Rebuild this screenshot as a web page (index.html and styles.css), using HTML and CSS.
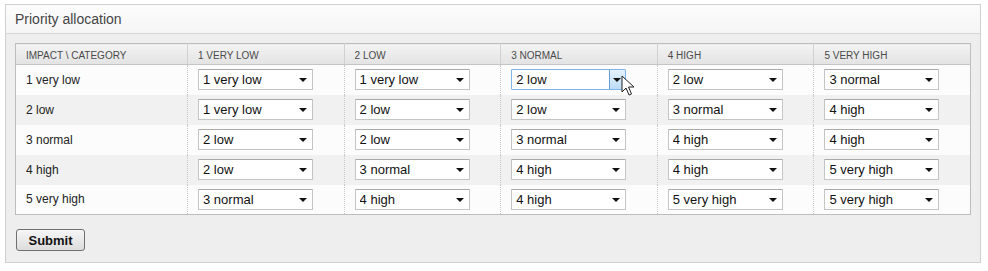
FILE: index.html
```html
<!DOCTYPE html>
<html lang="en">
<head>
    <meta charset="UTF-8">
    <title>Priority allocation</title>
    <link rel="stylesheet" href="styles.css">
</head>
<body>
    <div class="panel">
        <div class="panel-head">Priority allocation</div>
        <form class="panel-body">
            <table class="matrix">
                <thead>
                    <tr>
                        <th>Impact \ Category</th>
                        <th>1 very low</th>
                        <th>2 low</th>
                        <th>3 normal</th>
                        <th>4 high</th>
                        <th>5 very high</th>
                    </tr>
                </thead>
                <tbody id="rows">
                    <!-- rows are generated below -->
                </tbody>
            </table>
            <button type="button" class="submit-btn">Submit</button>
        </form>
    </div>

    <script>
        const levels = ['1 very low', '2 low', '3 normal', '4 high', '5 very high'];
        const matrix = [
            [0, 0, 1, 1, 2],
            [0, 1, 1, 2, 3],
            [1, 1, 2, 3, 3],
            [1, 2, 3, 3, 4],
            [2, 3, 3, 4, 4]
        ];
        const rows = document.getElementById('rows');

        matrix.forEach((row, r) => {
            const tr = document.createElement('tr');
            const label = document.createElement('td');
            label.className = 'row-label';
            label.textContent = levels[r];
            tr.appendChild(label);

            row.forEach((value, c) => {
                const td = document.createElement('td');
                const wrap = document.createElement('div');
                wrap.className = 'select-wrap';
                // the one the mouse is over
                if (r === 0 && c === 2) wrap.classList.add('hover');

                const select = document.createElement('select');
                levels.forEach((level, i) => {
                    const opt = document.createElement('option');
                    opt.textContent = level;
                    if (i === value) opt.selected = true;
                    select.appendChild(opt);
                });
                wrap.appendChild(select);

                const arrow = document.createElement('span');
                arrow.className = 'arrow';
                wrap.appendChild(arrow);

                if (wrap.classList.contains('hover')) {
                    wrap.insertAdjacentHTML('beforeend',
                        '<svg class="cursor" width="14" height="22" viewBox="0 0 14 22">' +
                        '<path d="M1 1 L1 17 L5 13 L8 20 L10.5 19 L7.5 12 L13 12 Z" fill="#fff" stroke="#222" stroke-width="1" stroke-linejoin="round"/>' +
                        '</svg>');
                }
                td.appendChild(wrap);
                tr.appendChild(td);
            });
            rows.appendChild(tr);
        });
    </script>
</body>
</html>
```

FILE: styles.css
```css
* {
    margin: 0;
    padding: 0;
    box-sizing: border-box;
}

body {
    background: #fff;
    font-family: 'Liberation Sans', Arial, sans-serif;
    color: #222;
    padding: 4px 7px 0 5px;
}

.panel {
    width: 976px;
    height: 259px;
    border: 1px solid #d0d0d0;
    background: #eeeeee;
}

.panel-head {
    height: 29px;
    padding: 6px 9px 0;
    font-size: 14px;
    color: #444;
    background: linear-gradient(#fcfcfc, #f5f5f5);
    border-bottom: 1px solid #d6d6d6;
}

.panel-body {
    padding: 9px 9px 0;
}

.matrix {
    width: 956px;
    border-collapse: collapse;
    border: 1px solid #bdbdbd;
    table-layout: fixed;
}

.matrix th {
    height: 21px;
    padding: 3px 0 0 10px;
    text-align: left;
    font-size: 10px;
    font-weight: normal;
    text-transform: uppercase;
    color: #4a4a4a;
    background: linear-gradient(#f3f3f3, #e3e3e3);
    border-bottom: 1px solid #c4c4c4;
    border-left: 1px solid #d0d0d0;
    vertical-align: middle;
}

.matrix th:first-child {
    width: 172px;
    border-left: none;
}

.matrix td {
    height: 30px;
    padding: 0 0 0 10px;
    border-left: 1px dotted #c8c8c8;
    vertical-align: middle;
}

.matrix td.row-label {
    border-left: none;
    font-size: 12px;
    color: #222;
}

.matrix tbody tr:nth-child(odd) {
    background: #fcfcfc;
}

.matrix tbody tr:nth-child(even) {
    background: #f1f1f1;
}

.select-wrap {
    position: relative;
    width: 115px;
    height: 21px;
}

.select-wrap select {
    appearance: none;
    -webkit-appearance: none;
    width: 100%;
    height: 100%;
    padding: 0 0 0 4px;
    font-family: 'Liberation Sans', Arial, sans-serif;
    font-size: 13px;
    color: #111;
    background: #fff;
    border: 1px solid #c4c4c4;
    border-top-color: #aaa;
    border-radius: 1px;
    outline: none;
}

.arrow {
    position: absolute;
    right: 6px;
    top: 9px;
    width: 0;
    height: 0;
    border-left: 4px solid transparent;
    border-right: 4px solid transparent;
    border-top: 4px solid #111;
    pointer-events: none;
}

.select-wrap.hover select {
    border-color: #7eb4ea;
}

.select-wrap.hover::after {
    content: '';
    position: absolute;
    right: 1px;
    top: 1px;
    width: 15px;
    height: 19px;
    border-left: 1px solid #6a9fd6;
    background: linear-gradient(#e6f2fc, #bcdcf6);
}

.select-wrap.hover .arrow {
    z-index: 1;
    right: 5px;
}

.cursor {
    position: absolute;
    left: 110px;
    top: 6px;
    z-index: 2;
}

.submit-btn {
    display: block;
    margin: 14px 0 0 1px;
    width: 69px;
    height: 22px;
    font-family: 'Liberation Sans', Arial, sans-serif;
    font-size: 13px;
    font-weight: bold;
    color: #111;
    background: linear-gradient(#f6f6f6, #dcdcdc);
    border: 1px solid #707070;
    border-radius: 3px;
}
```
